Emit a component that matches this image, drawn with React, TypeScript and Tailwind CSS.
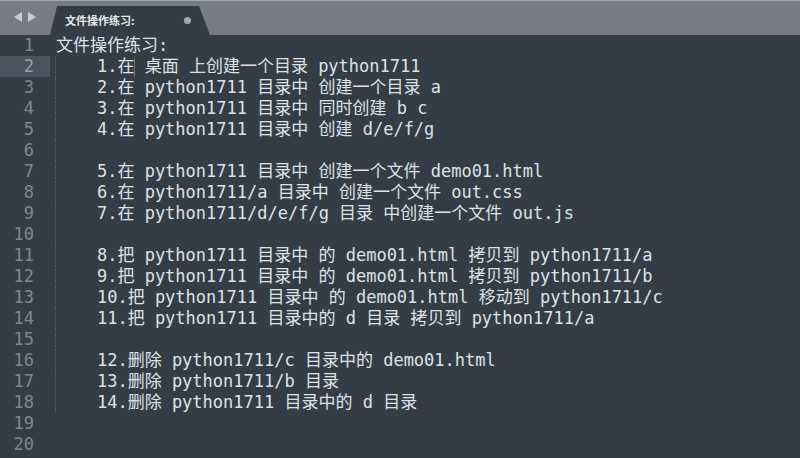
import React from "react";

const lines: string[] = [
  "文件操作练习:",
  "    1.在 桌面 上创建一个目录 python1711",
  "    2.在 python1711 目录中 创建一个目录 a",
  "    3.在 python1711 目录中 同时创建 b c",
  "    4.在 python1711 目录中 创建 d/e/f/g",
  "",
  "    5.在 python1711 目录中 创建一个文件 demo01.html",
  "    6.在 python1711/a 目录中 创建一个文件 out.css",
  "    7.在 python1711/d/e/f/g 目录 中创建一个文件 out.js",
  "",
  "    8.把 python1711 目录中 的 demo01.html 拷贝到 python1711/a",
  "    9.把 python1711 目录中 的 demo01.html 拷贝到 python1711/b",
  "    10.把 python1711 目录中 的 demo01.html 移动到 python1711/c",
  "    11.把 python1711 目录中的 d 目录 拷贝到 python1711/a",
  "",
  "    12.删除 python1711/c 目录中的 demo01.html",
  "    13.删除 python1711/b 目录",
  "    14.删除 python1711 目录中的 d 目录",
  "",
  "",
];

const mono = "font-['DejaVu_Sans_Mono','Noto_Sans_CJK_SC',monospace]";

const CodeLine = ({ n, text }: { n: number; text: string }) => {
  const current = n === 2;
  const guide = n >= 2 && n <= 18;
  return (
    <div className="flex h-[21px] items-center">
      <div
        className={`flex h-full w-[50px] items-center justify-end pr-[16px] ${
          current ? "bg-[#4a5360] text-[#9aa1a9]" : "text-[#7f8790]"
        }`}
      >
        {n}
      </div>
      <div className="relative flex h-full flex-1 items-center pl-[6px] text-[#dde2e7] whitespace-pre">
        {guide && (
          <div className="absolute left-[5px] top-0 h-full border-l border-dotted border-[#5b646e]" />
        )}
        {current ? (
          <span>
            {"    1.在"}
            <span className="inline-block h-[19px] w-px -mr-px bg-[#8a6d4e] align-middle" />
            {" 桌面 上创建一个目录 python1711"}
          </span>
        ) : (
          <span>{text}</span>
        )}
      </div>
    </div>
  );
};

export default function App() {
  return (
    <div className={`h-[458px] w-[800px] overflow-hidden bg-[#343d46] ${mono}`}>
      <div className="flex h-[35px] items-end border-t border-[#a3a6ab] bg-[#787c84]">
        <div className="flex h-full w-[50px] items-center justify-center gap-[6px] pb-[2px] text-[#c9ccd0]">
          <svg width="8" height="10" viewBox="0 0 8 10">
            <path d="M8 0 L0 5 L8 10 Z" fill="currentColor" />
          </svg>
          <svg width="8" height="10" viewBox="0 0 8 10">
            <path d="M0 0 L8 5 L0 10 Z" fill="currentColor" />
          </svg>
        </div>
        <div className="flex h-[29px] w-[160px] items-center justify-between bg-[#343d46] pl-[15px] pr-[19px] [clip-path:polygon(7px_0,149px_0,160px_100%,0_100%)]">
          <span className="font-['Noto_Sans_CJK_SC',sans-serif] text-[11px] font-bold text-[#e6e8eb]">
            文件操作练习:
          </span>
          <span className="h-[7px] w-[7px] rounded-full bg-[#a3a7ad]" />
        </div>
      </div>
      <div className="text-[17px] leading-[21px]">
        {lines.map((t, i) => (
          <CodeLine key={i} n={i + 1} text={t} />
        ))}
      </div>
    </div>
  );
}
